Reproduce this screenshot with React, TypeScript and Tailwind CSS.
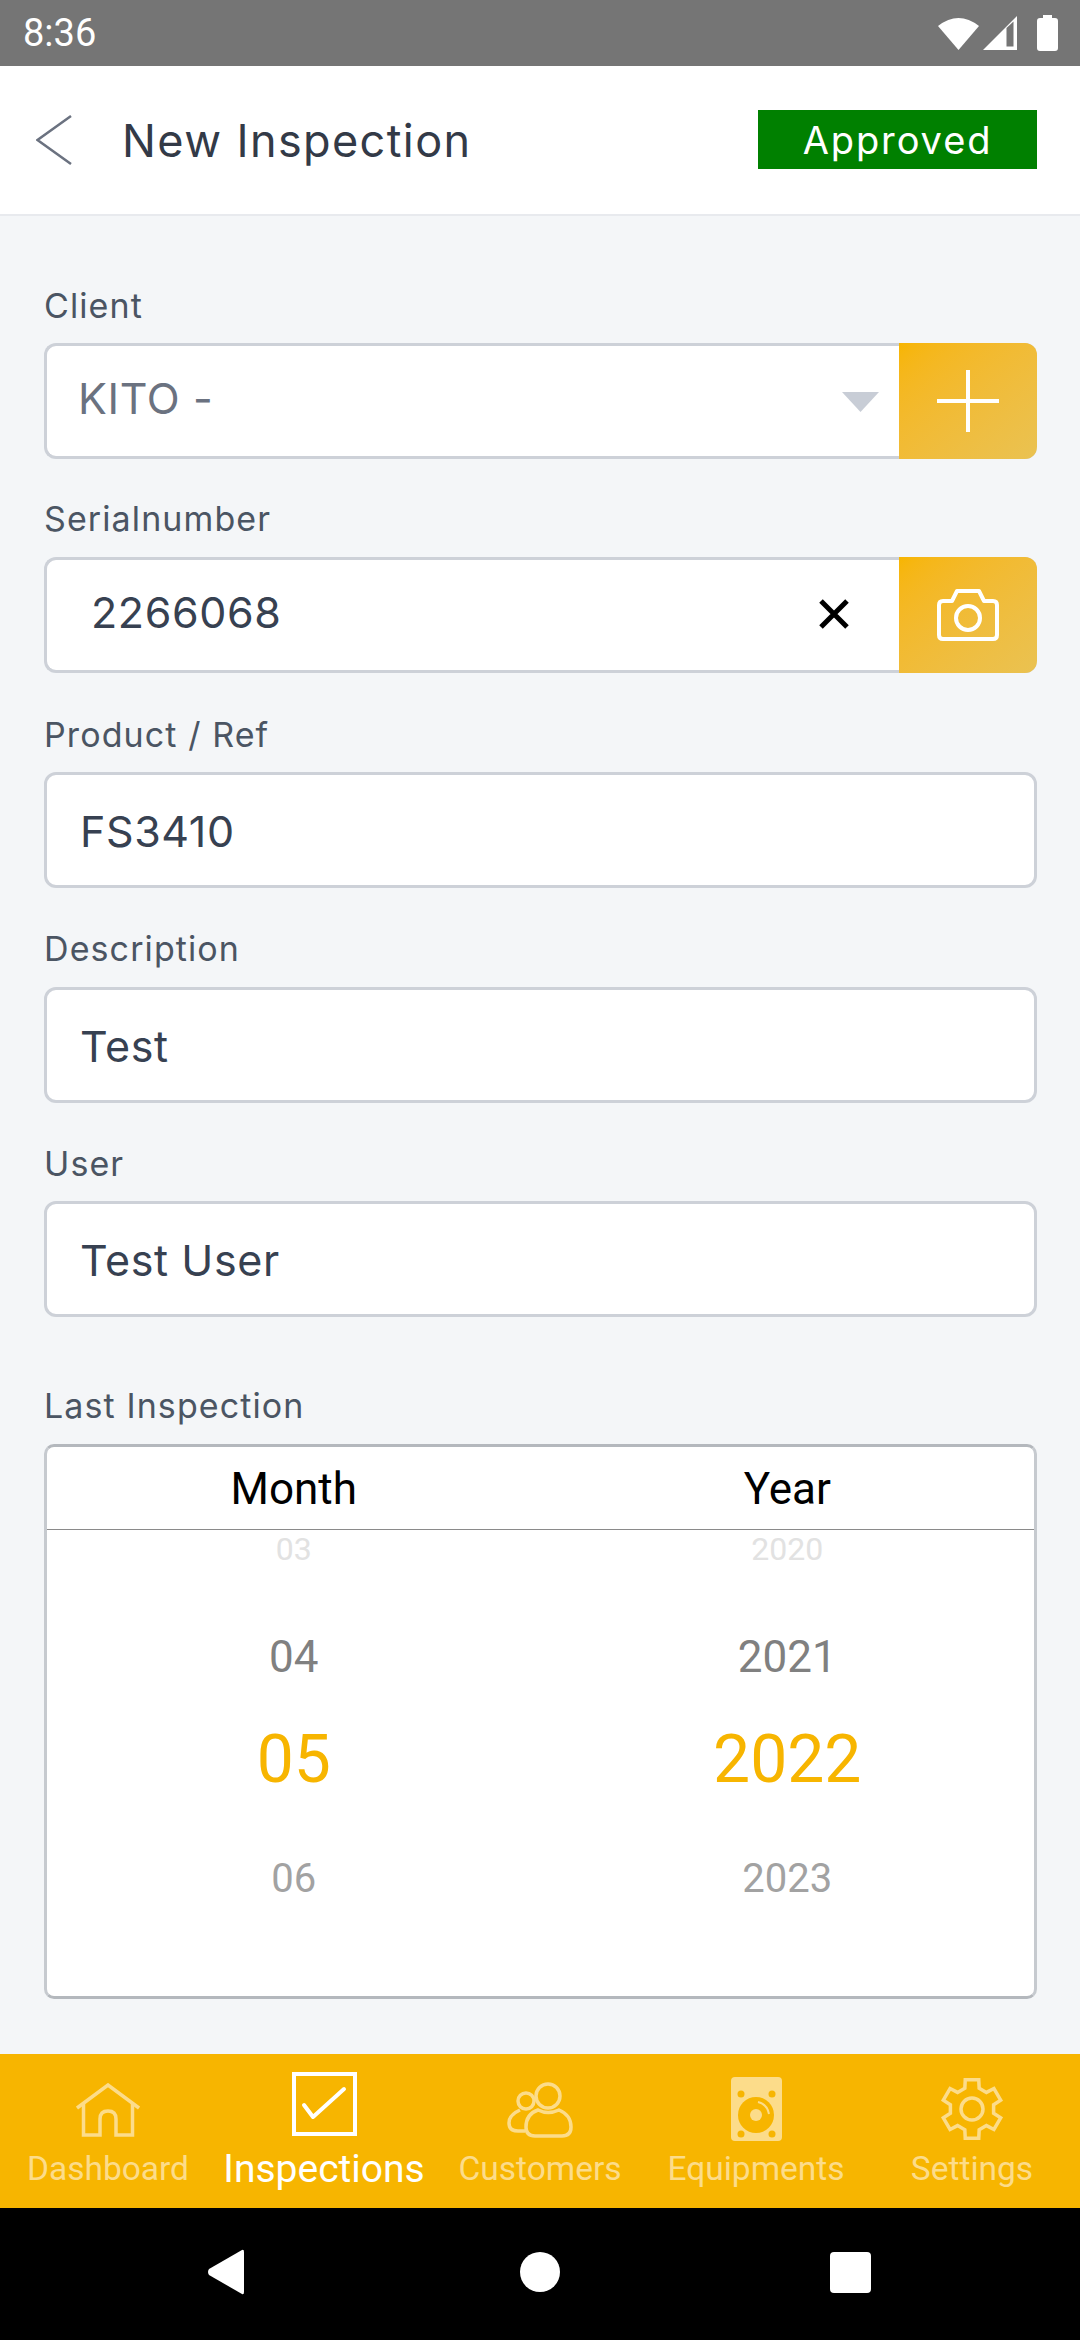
import React from "react";

const sans = "font-['Inter','Noto_Sans',sans-serif]";
const roboto = "font-['Roboto',sans-serif]";

function Label({ children }: { children: React.ReactNode }) {
  return (
    <div className="pt-[41px] h-[99px]">
      <div className="h-[40px] flex items-center text-[34px] text-[#4b5563] tracking-[1.1px]">{children}</div>
    </div>
  );
}

function Field({ label, value }: { label: string; value: string }) {
  return (
    <div className="h-[214.5px]">
      <Label>{label}</Label>
      <div className="h-[116px] rounded-[12px] border-[3px] border-[#cdd1d8] bg-white flex items-center pl-[33px] pt-[3px] text-[43px] text-[#374151] tracking-[0.6px]">
        {value}
      </div>
    </div>
  );
}

function ActionButton({ children }: { children: React.ReactNode }) {
  return (
    <div className="w-[138px] h-full rounded-r-[12px] bg-gradient-to-br from-[#f7b500] to-[#eac251] flex items-center justify-center">
      {children}
    </div>
  );
}

function Wheel({ items }: { items: [string, string, string, string] }) {
  return (
    <div className={`flex-1 flex flex-col items-center ${roboto}`}>
      <div className="h-[40px] -mt-[1px] flex items-center text-[32px] text-[#e2e2e2]">{items[0]}</div>
      <div className="h-[70px] mt-[53px] flex items-center text-[44px] text-[#808080]">{items[1]}</div>
      <div className="h-[80px] mt-[28px] flex items-center text-[66px] text-[#f7b500]">{items[2]}</div>
      <div className="h-[60px] mt-[49px] flex items-center text-[40px] text-[#a2a2a2]">{items[3]}</div>
    </div>
  );
}

function NavItem({ label, active, children }: { label: string; active?: boolean; children: React.ReactNode }) {
  return (
    <div className="w-[216px] flex flex-col items-center">
      <div className="h-[93px] pt-[16px] flex items-start justify-center">{children}</div>
      <div className={`h-[44px] flex items-center ${roboto} ${active ? "text-[39px] text-white" : "text-[33.5px] text-[#fcdc8a]"}`}>
        {label}
      </div>
    </div>
  );
}

function gearPath(cx: number, cy: number, outer: number, base: number): string {
  const pts: string[] = [];
  const pt = (r: number, deg: number) => {
    const a = ((deg - 90) * Math.PI) / 180;
    return `${(cx + r * Math.cos(a)).toFixed(2)} ${(cy + r * Math.sin(a)).toFixed(2)}`;
  };
  for (let i = 0; i < 6; i++) {
    const t = i * 60;
    pts.push(pt(base, t - 19), pt(outer, t - 13), pt(outer, t + 13), pt(base, t + 19));
  }
  return "M" + pts.join("L") + "Z";
}

export default function App() {
  const soft = "#fcdc8a";
  return (
    <div className={`w-[1080px] h-[2340px] flex flex-col bg-[#f4f6f8] overflow-hidden ${sans}`}>
      {/* status bar */}
      <div className={`h-[66px] bg-[#757575] flex items-center justify-between pl-[23px] pr-[22px] text-white ${roboto}`}>
        <span className="text-[38px]">8:36</span>
        <div className="flex items-center">
          <svg width="41" height="33" viewBox="0 0 41 33" className="mr-[4px]"><path d="M0 9 Q20.5 -7 41 9 L20.5 33Z" fill="#fff" /></svg>
          <svg width="34" height="34" viewBox="0 0 34 34" className="mr-[20px]">
            <path d="M34 0V34H0Z" fill="#fff" />
            <path d="M23.5 12L30.5 5.5V30.5H23.5Z" fill="#757575" />
          </svg>
          <svg width="21" height="36" viewBox="0 0 21 36"><path d="M6 0H15V3H18Q21 3 21 6V33Q21 36 18 36H3Q0 36 0 33V6Q0 3 3 3H6Z" fill="#fff" /></svg>
        </div>
      </div>

      {/* header */}
      <div className="h-[150px] shrink-0 bg-white border-b-[2px] border-[#e8eaee] flex items-center pl-[36px] pr-[43px]">
        <svg width="36" height="50" viewBox="0 0 36 50" fill="none" stroke="#6b7280" strokeWidth="2.5"><path d="M35 1L1.5 25L35 49" /></svg>
        <div className="ml-[50px] pt-[2px] text-[45px] text-[#333a47] tracking-[1.4px] flex-1">New Inspection</div>
        <div className="w-[279px] h-[59px] mb-[1px] pt-[2px] bg-[#008000] flex items-center justify-center text-white text-[38px] tracking-[1.9px]">Approved</div>
      </div>

      {/* form */}
      <div className="h-[1838px] shrink-0 px-[44px] pt-[28px]">
        <div className="w-[993px]">
          <div className="h-[213.5px]">
            <Label>Client</Label>
            <div className="h-[116px] rounded-[12px] border-[3px] border-r-0 border-[#cdd1d8] bg-white flex items-center">
              <div className="flex-1 pl-[31px] pb-[6px] text-[43px] text-[#6b7280] tracking-[0.6px]">KITO -</div>
              <svg width="37" height="20" viewBox="0 0 37 20" className="mr-[20px] mt-[2px]"><path d="M0 0H37L18.5 20Z" fill="#c8cdd6" /></svg>
              <div className="h-[116px] -my-[3px]">
                <ActionButton>
                  <svg width="62" height="62" viewBox="0 0 62 62" stroke="#fff" strokeWidth="4"><path d="M31 0V62M0 31H62" /></svg>
                </ActionButton>
              </div>
            </div>
          </div>

          <div className="h-[215.5px]">
            <Label>Serialnumber</Label>
            <div className="h-[116px] rounded-[12px] border-[3px] border-r-0 border-[#cdd1d8] bg-white flex items-center">
              <div className="flex-1 pl-[44px] pb-[5px] text-[43px] text-[#374151] tracking-[0.6px]">2266068</div>
              <svg width="30" height="30" viewBox="0 0 30 30" stroke="#000" strokeWidth="5" className="mr-[50px] -mt-[2px]"><path d="M2 2L28 28M28 2L2 28" /></svg>
              <div className="h-[116px] -my-[3px]">
                <ActionButton>
                  <svg width="62" height="52" viewBox="0 0 62 52" fill="none" stroke="#fff" strokeWidth="4" strokeLinejoin="round">
                    <path d="M6 12H15L20 2H42L47 12H56Q60 12 60 16V46Q60 50 56 50H6Q2 50 2 46V16Q2 12 6 12Z" />
                    <circle cx="31" cy="29" r="12" />
                  </svg>
                </ActionButton>
              </div>
            </div>
          </div>

          <Field label="Product / Ref" value="FS3410" />
          <Field label="Description" value="Test" />
          <Field label="User" value="Test User" />

          <div className="mt-[28px]">
            <Label>Last Inspection</Label>
            <div className="h-[555px] rounded-[10px] border-[3px] border-[#c6cacf] border-t-[#b4b8bd] border-b-[#b4b8bd] bg-white flex flex-col">
              <div className={`h-[83px] shrink-0 border-b border-[#8a8a8a] flex pt-[3px] text-[44px] text-black ${roboto}`}>
                <div className="flex-1 flex items-center justify-center">Month</div>
                <div className="flex-1 flex items-center justify-center">Year</div>
              </div>
              <div className="flex">
                <Wheel items={["03", "04", "05", "06"]} />
                <Wheel items={["2020", "2021", "2022", "2023"]} />
              </div>
            </div>
          </div>
        </div>
      </div>

      {/* tab bar */}
      <div className="h-[154px] shrink-0 bg-[#f7b500] flex">
        <NavItem label="Dashboard">
          <svg width="64" height="54" viewBox="0 0 64 54" fill="none" stroke={soft} strokeWidth="3.5" className="mt-[13px]">
            <path d="M1 25L32 2L63 25" />
            <path d="M7.5 21V52H24V36Q24 28 32 28Q40 28 40 36V52H56.5V21" />
          </svg>
        </NavItem>
        <NavItem label="Inspections" active>
          <svg width="65" height="64" viewBox="0 0 65 64" fill="none" stroke="#fff" className="mt-[2px]">
            <rect x="2" y="2" width="61" height="60" strokeWidth="4" />
            <path d="M12 33L21 45L52 17" strokeWidth="4" strokeLinecap="round" strokeLinejoin="round" />
          </svg>
        </NavItem>
        <NavItem label="Customers">
          <svg width="66" height="56" viewBox="0 0 66 56" fill="none" stroke={soft} strokeWidth="3.5" className="mt-[12px]">
            <circle cx="41" cy="14" r="12" />
            <circle cx="19" cy="19" r="8" />
            <path d="M18 49H11Q2 49 2 41Q2 33 13 28" />
            <path d="M19 45Q19 32 31 28Q41 33 52 28Q64 33 64 45Q64 54 55 54H28Q19 54 19 45Z" />
          </svg>
        </NavItem>
        <NavItem label="Equipments">
          <svg width="51" height="64" viewBox="0 0 51 64" className="mt-[7px]">
            <rect width="51" height="64" rx="4" fill={soft} />
            <circle cx="10" cy="17" r="3.5" fill="#f7b500" />
            <circle cx="41" cy="17" r="3.5" fill="#f7b500" />
            <circle cx="10" cy="57" r="3.5" fill="#f7b500" />
            <circle cx="41" cy="57" r="3.5" fill="#f7b500" />
            <circle cx="25" cy="38" r="18" fill="#f7b500" />
            <circle cx="25" cy="38" r="6" fill={soft} />
            <path d="M27 25Q36 27 38 37" fill="none" stroke={soft} strokeWidth="2" />
          </svg>
        </NavItem>
        <NavItem label="Settings">
          <svg width="64" height="64" viewBox="0 0 64 64" fill="none" stroke={soft} strokeWidth="3.5" strokeLinejoin="miter" className="mt-[7px]">
            <path d={gearPath(32, 32, 30, 22)} />
            <circle cx="32" cy="32" r="11" />
          </svg>
        </NavItem>
      </div>

      {/* android nav */}
      <div className="flex-1 bg-black flex items-center">
        <div className="flex items-center pl-[207px] pb-[4px]">
          <svg width="37" height="46" viewBox="0 0 37 46"><path d="M35 1Q37 0 37 3V43Q37 46 35 45L2 26Q0 23 2 20Z" fill="#fff" /></svg>
          <div className="ml-[276px] w-[40px] h-[40px] rounded-full bg-white" />
          <div className="ml-[270px] w-[41px] h-[41px] rounded-[4px] bg-white" />
        </div>
      </div>
    </div>
  );
}
